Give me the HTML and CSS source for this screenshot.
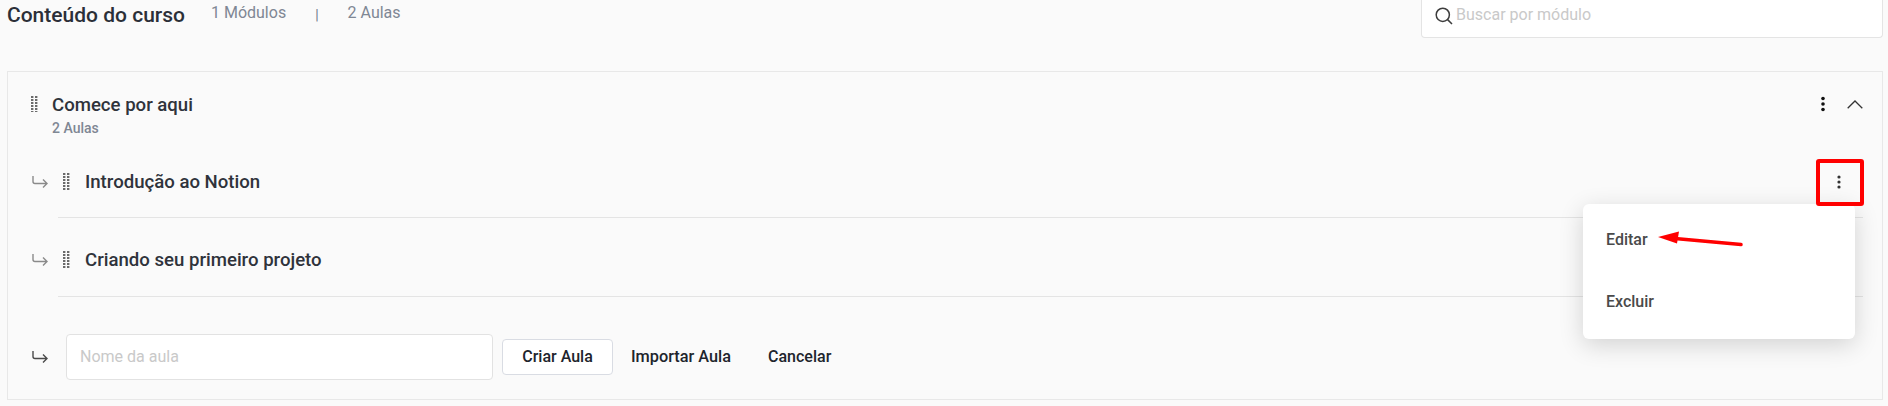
FILE: index.html
```html
<!DOCTYPE html>
<html lang="pt-BR">
<head>
<meta charset="utf-8">
<title>Conteúdo do curso</title>
<link rel="stylesheet" href="styles.css">
</head>
<body>
<div class="page">
  <header class="top">
    <h1 class="title">Conteúdo do curso</h1>
    <span class="stat">1 Módulos</span>
    <span class="sep">|</span>
    <span class="stat">2 Aulas</span>
    <label class="search">
      <svg class="search-icon" viewBox="0 0 20 20" width="20" height="20"><circle cx="8.8" cy="8.8" r="6.6"/><path d="M13.6 13.6 18 18"/></svg>
      <input class="search-input" type="text" placeholder="Buscar por módulo">
    </label>
  </header>
  <section class="card">
    <div class="module">
      <svg class="grip" viewBox="0 0 7 16" width="7" height="16"><path d="M1.200 0v16M5.200 0v16"/></svg>
      <div class="module-text">
        <div class="module-name">Comece por aqui</div>
        <div class="module-count">2 Aulas</div>
      </div>
      <svg class="kebab kebab-dark" viewBox="0 0 4 16" width="4" height="16"><circle cx="2" cy="2.500" r="1.800"/><circle cx="2" cy="8" r="1.800"/><circle cx="2" cy="13.500" r="1.800"/></svg>
      <svg class="chevron" viewBox="0 0 16 9" width="16" height="9"><path d="M.7 8.300 8 1l7.300 7.300"/></svg>
    </div>
    <div class="lesson lesson-first">
      <svg class="turn" viewBox="0 0 16 12" width="16" height="12"><path d="M1 0v5.500c0 1.200.8 2 2 2h12M11 3.500l4 4-4 4"/></svg>
      <svg class="grip" viewBox="0 0 7 18" width="7" height="18"><path d="M1.200 0v18M5.200 0v18"/></svg>
      <div class="lesson-name">Introdução ao Notion</div>
      <svg class="kebab" viewBox="0 0 4 14" width="4" height="14"><circle cx="2" cy="2" r="1.600"/><circle cx="2" cy="7" r="1.600"/><circle cx="2" cy="12" r="1.600"/></svg>
    </div>
    <div class="lesson">
      <svg class="turn" viewBox="0 0 16 12" width="16" height="12"><path d="M1 0v5.500c0 1.200.8 2 2 2h12M11 3.500l4 4-4 4"/></svg>
      <svg class="grip" viewBox="0 0 7 18" width="7" height="18"><path d="M1.200 0v18M5.200 0v18"/></svg>
      <div class="lesson-name">Criando seu primeiro projeto</div>
    </div>
    <div class="create">
      <svg class="turn turn-dark" viewBox="0 0 16 12" width="16" height="12"><path d="M1 0v5.500c0 1.200.8 2 2 2h12M11 3.500l4 4-4 4"/></svg>
      <input class="name-input" type="text" placeholder="Nome da aula">
      <button class="btn btn-primary" type="button">Criar Aula</button>
      <button class="btn btn-link" type="button">Importar Aula</button>
      <button class="btn btn-link" type="button">Cancelar</button>
    </div>
  </section>
  <div class="menu">
    <div class="menu-item">Editar</div>
    <div class="menu-item">Excluir</div>
  </div>
  <div class="highlight"></div>
  <svg class="pointer" viewBox="0 0 90 20" width="90" height="20"><path class="pointer-line" d="M84 13.500 18 7.500"/><path class="pointer-head" d="M1 6 22 .5 20 12.500z"/></svg>
</div>
</body>
</html>
```
FILE: styles.css
```css
* { box-sizing: border-box; }
html, body { margin: 0; padding: 0; height: 100%; overflow: hidden; }
body { background: #fafafa; font-family: Roboto, "Liberation Sans", sans-serif; color: #2b2f38; }
.page { position: relative; width: 1888px; height: 406px; padding: 0 5px 0 7px; }

.top { display: flex; align-items: flex-start; height: 71px; }
.title { margin: 3px 26px 0 0; font-size: 21px; line-height: 24px; font-weight: 500; color: #2b2f38; }
.stat { margin-top: 3px; font-size: 16px; line-height: 20px; color: #7f8794; }
.sep { margin: 5px 29px 0; font-size: 14px; line-height: 20px; color: #6f7a8a; }
.search { margin-left: auto; width: 462px; height: 38px; display: flex; align-items: center; gap: 2px; padding: 0 12px; background: #fff; border: 1px solid #e4e4e4; border-top: 0; border-radius: 0 0 4px 4px; }
.search-icon { flex: none; fill: none; stroke: #3d3d3d; stroke-width: 1.500; margin-top: 6px; align-self: flex-start; }
.search-input { flex: 1; min-width: 0; border: 0; outline: 0; padding: 0; background: transparent; font: 400 16px Roboto, sans-serif; margin-top: -9px; }
.search-input::placeholder, .name-input::placeholder { color: #c9c9c9; opacity: 1; }

.card { height: 329px; background: #fafafa; border: 1px solid #e8e8e8; padding: 0 19px 0 23px; }
.module { display: flex; align-items: flex-start; height: 75px; padding-top: 23px; }
.module .grip { margin-top: 1px; }
.module-text { margin-left: 14px; flex: 1; }
.module-name { font-size: 18.6px; line-height: 20px; font-weight: 500; color: #2f333b; }
.module-count { margin-top: 5px; font-size: 14px; line-height: 16px; font-weight: 500; color: #7f8794; }
.grip { flex: none; fill: none; stroke: #6a6a6a; stroke-width: 2.400; stroke-dasharray: 2 1; }
.kebab { flex: none; fill: #333; }
.kebab-dark { fill: #111; margin: 1px 22px 0 0; }
.chevron { flex: none; fill: none; stroke: #333; stroke-width: 1.300; margin-top: 5px; }

.lesson { display: flex; align-items: center; height: 71px; margin-left: 1px; padding-bottom: 1px; position: relative; }
.lesson::after { content: ""; position: absolute; left: 26px; right: 0; bottom: 0; height: 1px; background: #e4e4e4; }
.lesson + .lesson { height: 79px; padding-top: 7px; padding-bottom: 3px; }
.turn { flex: none; fill: none; stroke: #8a8a8a; stroke-width: 1.400; }
.turn-dark { stroke: #4a4a4a; }
.lesson .grip { margin-left: 15px; }
.lesson-name { flex: 1; margin-left: 15px; font-size: 18.6px; line-height: 24px; font-weight: 500; color: #2f333b; }
.lesson .kebab { margin-right: 22px; }

.create { display: flex; align-items: center; margin: 36px 0 0 1px; height: 47px; }
.name-input { margin-left: 18px; width: 427px; height: 46px; padding: 0 13px; background: #fff; border: 1px solid #e2e2e2; border-radius: 4px; font: 400 16px Roboto, sans-serif; outline: 0; }
.btn { font: 500 16px Roboto, sans-serif; color: #20242c; background: transparent; border: 0; padding: 0; height: 36px; cursor: pointer; }
.btn-primary { margin-left: 9px; width: 111px; background: #fff; border: 1px solid #d9dce3; border-radius: 4px; }
.btn-link { margin-left: 18px; font-size: 16.3px; }
.btn-link + .btn-link { margin-left: 37px; font-size: 16px; }

.menu { position: absolute; left: 1583px; top: 204px; width: 272px; height: 135px; padding: 9px 0; background: #fff; border-radius: 6px; box-shadow: 0 6px 24px rgba(0,0,0,.16); }
.menu-item { height: 52px; display: flex; align-items: center; padding: 0 23px; font-size: 16px; font-weight: 500; color: #4a4a4a; }
.menu-item:first-child { margin-bottom: 10px; }
.highlight { position: absolute; left: 1816px; top: 159px; width: 48px; height: 47px; border: 4.500px solid #ff0000; border-radius: 3px; }
.pointer { position: absolute; left: 1657px; top: 231px; }
.pointer-line { fill: none; stroke: #ff0000; stroke-width: 3.500; stroke-linecap: round; }
.pointer-head { fill: #ff0000; }
```
